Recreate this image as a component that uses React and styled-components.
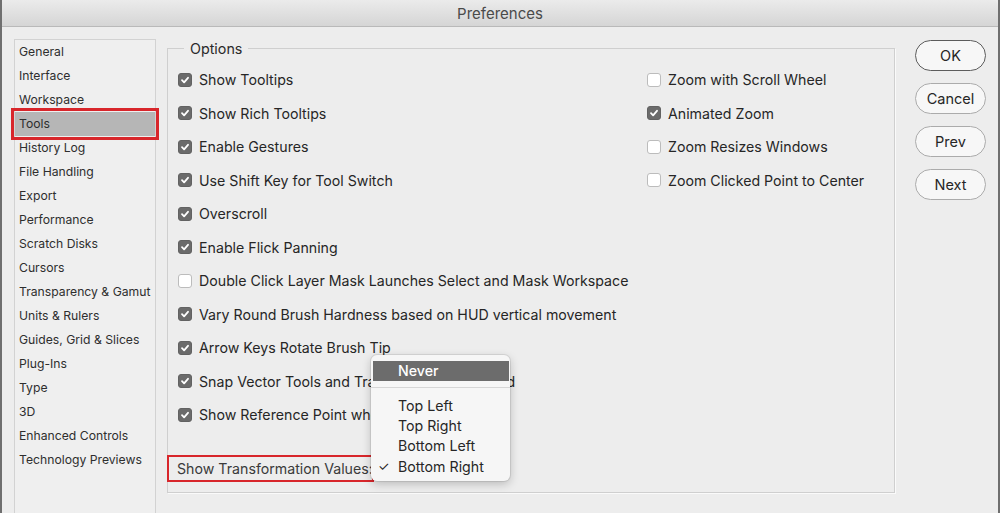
import styled, { createGlobalStyle } from "styled-components";

const GlobalStyle = createGlobalStyle`
  html, body {
    margin: 0;
    padding: 0;
    background: #ededed;
  }
  body {
    font-family: Inter, "Liberation Sans", sans-serif;
    color: #262626;
  }
`;

const sidebarItems = [
  "General",
  "Interface",
  "Workspace",
  "Tools",
  "History Log",
  "File Handling",
  "Export",
  "Performance",
  "Scratch Disks",
  "Cursors",
  "Transparency & Gamut",
  "Units & Rulers",
  "Guides, Grid & Slices",
  "Plug-Ins",
  "Type",
  "3D",
  "Enhanced Controls",
  "Technology Previews",
];

const leftOptions = [
  { label: "Show Tooltips", checked: true },
  { label: "Show Rich Tooltips", checked: true },
  { label: "Enable Gestures", checked: true },
  { label: "Use Shift Key for Tool Switch", checked: true },
  { label: "Overscroll", checked: true },
  { label: "Enable Flick Panning", checked: true },
  { label: "Double Click Layer Mask Launches Select and Mask Workspace", checked: false },
  { label: "Vary Round Brush Hardness based on HUD vertical movement", checked: true },
  { label: "Arrow Keys Rotate Brush Tip", checked: true },
  { label: "Snap Vector Tools and Transforms to Pixel Grid", checked: true },
  { label: "Show Reference Point when Using Transform", checked: true },
];

const rightOptions = [
  { label: "Zoom with Scroll Wheel", checked: false },
  { label: "Animated Zoom", checked: true },
  { label: "Zoom Resizes Windows", checked: false },
  { label: "Zoom Clicked Point to Center", checked: false },
];

const buttons = ["OK", "Cancel", "Prev", "Next"];

const Window = styled.div`
  width: 1000px;
  height: 513px;
  display: flex;
  flex-direction: column;
  overflow: hidden;
  box-sizing: border-box;
  border-left: 2px solid #6f6f6f;
  border-right: 2px solid #6f6f6f;
  background: #ededed;
`;

const TitleBar = styled.div`
  height: 27px;
  flex-shrink: 0;
  display: flex;
  align-items: center;
  justify-content: center;
  background: linear-gradient(#ebebeb, #d5d5d5);
  border-bottom: 1px solid #b9b9b9;
  border-top-right-radius: 6px;
  font-size: 15px;
  color: #4a4a4a;
  box-sizing: border-box;
`;

const Body = styled.div`
  flex: 1;
  display: flex;
  align-items: flex-start;
  padding: 12px 12px 0 12px;
  min-height: 0;
`;

const Sidebar = styled.ul`
  list-style: none;
  margin: 0;
  padding: 0;
  width: 142px;
  height: 520px;
  flex-shrink: 0;
  box-sizing: border-box;
  border: 1px solid #d2d2d2;
  background: #efefef;
`;

const SidebarItem = styled.li`
  height: 24px;
  line-height: 24px;
  padding-left: 4px;
  font-size: 12.2px;
  color: #2e2e2e;
  white-space: nowrap;
  background: ${props => (props.$selected ? "#b6b6b6" : "transparent")};
  outline: ${props => (props.$selected ? "3px solid #d8262b" : "none")};
  outline-offset: 1px;
  position: relative;
`;

const Group = styled.fieldset`
  width: 728px;
  height: 453px;
  box-sizing: border-box;
  margin: 1px 0 0 11px;
  padding: 6px 10px 0 10px;
  border: 1px solid #cfcfcf;
  box-shadow: 1px 1px 0 #fafafa;
  display: flex;
  flex-direction: column;
`;

const Legend = styled.legend`
  font-size: 14.3px;
  color: #2a2a2a;
  padding: 0 6px;
  margin-left: 6px;
`;

const Columns = styled.div`
  display: grid;
  grid-template-columns: 469px 1fr;
`;

const Column = styled.div`
  display: flex;
  flex-direction: column;
`;

const Row = styled.label`
  height: 33.5px;
  display: flex;
  align-items: center;
  gap: 7px;
  font-size: 14.2px;
  color: #262626;
  white-space: nowrap;
`;

const Box = styled.span`
  width: 14px;
  height: 14px;
  flex-shrink: 0;
  box-sizing: border-box;
  border-radius: 3px;
  display: flex;
  align-items: center;
  justify-content: center;
  background: ${props => (props.$checked ? "#6b6b6b" : "#ffffff")};
  border: 1px solid ${props => (props.$checked ? "#626262" : "#bcbcbc")};
`;

const Check = () => (
  <svg width="10" height="10" viewBox="0 0 10 10">
    <path d="M2 5.2 L4.1 7.3 L8 2.8" fill="none" stroke="#fff" strokeWidth="1.8" strokeLinecap="round" strokeLinejoin="round" />
  </svg>
);

const CheckRow = ({ label, checked }) => (
  <Row>
    <Box $checked={checked}>{checked && <Check />}</Box>
    {label}
  </Row>
);

const TransformRow = styled.div`
  margin-top: 23px;
  margin-left: -11px;
  position: relative;
  display: flex;
`;

const TransformLabel = styled.span`
  height: 27px;
  box-sizing: border-box;
  border: 2.5px solid #d8262b;
  display: flex;
  align-items: center;
  padding: 0 0 0 8px;
  width: 207px;
  font-size: 14.2px;
  color: #3a3a3a;
  white-space: nowrap;
`;

const Menu = styled.div`
  position: absolute;
  left: 204px;
  bottom: 1px;
  width: 139px;
  padding: 6px 0 4px;
  box-sizing: border-box;
  background: #f6f6f6;
  border-radius: 6px;
  box-shadow: 0 0 0 1px rgba(0, 0, 0, 0.08), 0 3px 10px rgba(0, 0, 0, 0.22);
  z-index: 2;
`;

const MenuItem = styled.div`
  height: 20.4px;
  display: flex;
  align-items: center;
  margin: 0 1px 0 2px;
  padding-left: 25px;
  position: relative;
  font-size: 14.2px;
  color: ${props => (props.$active ? "#ffffff" : "#262626")};
  background: ${props => (props.$active ? "#6c6c6c" : "transparent")};
  font-weight: ${props => (props.$active ? 500 : 400)};
`;

const Tick = styled.span`
  position: absolute;
  left: 5px;
  font-size: 13px;
`;

const Separator = styled.div`
  height: 14px;
  display: flex;
  align-items: center;
  &::after {
    content: "";
    flex: 1;
    height: 1px;
    background: #d6d6d6;
  }
`;

const Buttons = styled.div`
  display: flex;
  flex-direction: column;
  gap: 12px;
  margin-left: 20px;
  margin-top: 1px;
`;

const Button = styled.button`
  width: 71px;
  height: 31px;
  border-radius: 16px;
  font-family: inherit;
  font-size: 14.5px;
  color: #262626;
  background: #f7f7f7;
  border: 1px solid ${props => (props.$primary ? "#5c5c5c" : "#ababab")};
  padding: 0;
`;

export default function App() {
  return (
    <>
      <GlobalStyle />
      <Window>
        <TitleBar>Preferences</TitleBar>
        <Body>
          <Sidebar>
            {sidebarItems.map(item => (
              <SidebarItem key={item} $selected={item === "Tools"}>
                {item}
              </SidebarItem>
            ))}
          </Sidebar>
          <Group>
            <Legend>Options</Legend>
            <Columns>
              <Column>
                {leftOptions.map(o => (
                  <CheckRow key={o.label} {...o} />
                ))}
              </Column>
              <Column>
                {rightOptions.map(o => (
                  <CheckRow key={o.label} {...o} />
                ))}
              </Column>
            </Columns>
            <TransformRow>
              <TransformLabel>Show Transformation Values:</TransformLabel>
              <Menu>
                <MenuItem $active>Never</MenuItem>
                <Separator />
                <MenuItem>Top Left</MenuItem>
                <MenuItem>Top Right</MenuItem>
                <MenuItem>Bottom Left</MenuItem>
                <MenuItem>
                  <Tick>✓</Tick>
                  Bottom Right
                </MenuItem>
              </Menu>
            </TransformRow>
          </Group>
          <Buttons>
            {buttons.map(b => (
              <Button key={b} $primary={b === "OK"}>
                {b}
              </Button>
            ))}
          </Buttons>
        </Body>
      </Window>
    </>
  );
}
